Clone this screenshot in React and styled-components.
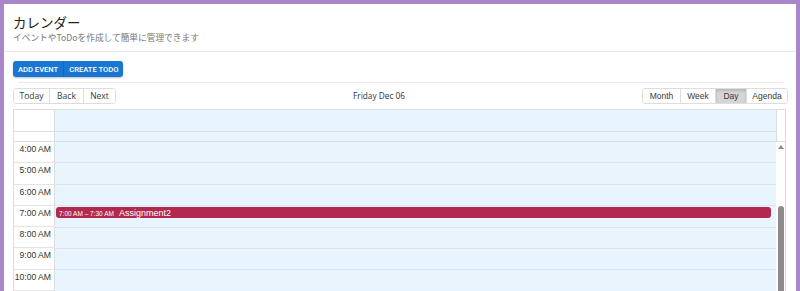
import styled, { createGlobalStyle } from "styled-components"

const GlobalStyle = createGlobalStyle`
    html, body {
        margin:0;
        padding:0;
        background:#a986c8;
        font-family:"Open Sans", "Noto Sans CJK JP", sans-serif;
        overflow:hidden;
    }
`

const Page = styled.div`
    height:291px;
    padding:4px 4px 0 4px;
    box-sizing:border-box;
`

const Card = styled.div`
    background:white;
    height:287px;
    display:flex;
    flex-direction:column;
    overflow:hidden;
`

const Header = styled.div`
    padding:9px 9px 0;
    height:48px;
    box-sizing:border-box;
    border-bottom:1px solid #e6e6e6;
`

const Title = styled.h1`
    margin:0;
    font-family:"Noto Sans CJK JP", sans-serif;
    font-weight:400;
    font-size:13.5px;
    line-height:18px;
    color:#222;
`

const Subtitle = styled.p`
    margin:1px 0 0;
    font-family:"Noto Sans CJK JP", sans-serif;
    font-size:8.7px;
    line-height:12px;
    color:#777;
`

const Actions = styled.div`
    padding:9px 9px 5px;
    display:flex;
`

const ButtonGroup = styled.div`
    display:flex;
    border-radius:3px;
    overflow:hidden;
    box-shadow:0 1px 2px rgba(0,0,0,0.25);
`

const BlueButton = styled.button`
    border:none;
    background:#1976d2;
    color:white;
    font-family:Roboto, sans-serif;
    font-weight:500;
    font-size:7.6px;
    height:16px;
    padding:0 ${p => p.$pad}px;
    border-left:${p => p.$first ? "none" : "1px solid #1565c0"};
`

const Divider = styled.div`
    height:1px;
    background:#ececec;
    margin:0 13px 0 14px;
`

const Toolbar = styled.div`
    display:flex;
    align-items:center;
    padding:5px 8px 0 9px;
    height:15px;
    margin-bottom:6px;
`

const Segment = styled.div`
    display:flex;
    border:1px solid #ddd;
    border-radius:3px;
    overflow:hidden;
`

const NavButton = styled.button`
    background:${p => p.$active ? "#d6d6d6" : "white"};
    box-shadow:${p => p.$active ? "inset 0 2px 3px rgba(0,0,0,0.15)" : "none"};
    border:none;
    border-left:${p => p.$first ? "none" : "1px solid #ddd"};
    height:14px;
    width:${p => p.$w}px;
    padding:0;
    font-family:${p => p.$arial ? '"Liberation Sans", Arial, sans-serif' : '"Open Sans", sans-serif'};
    font-size:8.5px;
    color:#373a3c;
`

const Label = styled.div`
    flex:1;
    text-align:center;
    font-size:8.3px;
    color:#333;
`

const Calendar = styled.div`
    margin:0 10px 0 9px;
    border:1px solid #ddd;
    border-bottom:none;
    flex:1;
    display:flex;
    flex-direction:column;
    overflow:hidden;
`

const HeadRow = styled.div`
    display:flex;
    height:31px;
    border-bottom:1px solid #ddd;
`

const Gutter = styled.div`
    width:40px;
    flex-shrink:0;
    border-right:1px solid #ddd;
    display:flex;
    flex-direction:column;
`

const HeadGutterTop = styled.div`
    height:21px;
    border-bottom:1px solid #ddd;
`

const HeadDay = styled.div`
    flex:1;
    background:#e8f4fe;
    display:flex;
    flex-direction:column;
`

const HeadDayTop = styled.div`
    height:21px;
    border-bottom:1px solid #ddd;
`

const ScrollCell = styled.div`
    width:8px;
    border-left:1px solid #ddd;
`

const Body = styled.div`
    display:flex;
    flex:1;
    overflow:hidden;
`

const Slot = styled.div`
    height:21.4px;
    box-sizing:border-box;
    border-bottom:1px solid #e4e4e4;
    text-align:right;
    white-space:nowrap;
    padding:1px 3px 0 0;
    font-family:"Liberation Sans", Arial, sans-serif;
    font-size:8.6px;
    line-height:12px;
    color:#333;
`

const DayCol = styled.div`
    flex:1;
    background:#e8f4fe;
    position:relative;
`

const HourCell = styled.div`
    height:21.4px;
    box-sizing:border-box;
    border-bottom:1px solid #e0e4e8;
    display:flex;
    flex-direction:column;
`

const HalfCell = styled.div`
    height:50%;
    border-bottom:1px solid #eef3f7;
`

const Event = styled.div`
    position:absolute;
    left:1px;
    right:5px;
    height:11px;
    background:#b3294e;
    border-radius:3px;
    color:white;
    display:flex;
    align-items:baseline;
    gap:5px;
    padding-left:3px;
    overflow:hidden;
    font-family:"Liberation Sans", Arial, sans-serif;
    white-space:nowrap;
`

const EventTime = styled.span`
    font-size:6.5px;
    line-height:10px;
`

const EventTitle = styled.span`
    font-size:9px;
    line-height:12px;
`

const Track = styled.div`
    width:9px;
    background:white;
    display:flex;
    flex-direction:column;
    align-items:center;
`

const Arrow = styled.div`
    margin-top:3px;
    width:0;
    height:0;
    border-left:3px solid transparent;
    border-right:3px solid transparent;
    border-bottom:4px solid #8a8a8a;
`

const Thumb = styled.div`
    margin-top:${p => p.$offset}px;
    width:6px;
    flex:1;
    background:#8c8c8c;
    border-radius:3px 3px 0 0;
`

const hours = ["4:00 AM", "5:00 AM", "6:00 AM", "7:00 AM", "8:00 AM", "9:00 AM", "10:00 AM"]

const App = () => {
    return (
        <Page>
            <GlobalStyle />
            <Card>
                <Header>
                    <Title>カレンダー</Title>
                    <Subtitle>イベントやToDoを作成して簡単に管理できます</Subtitle>
                </Header>
                <Actions>
                    <ButtonGroup>
                        <BlueButton $first $pad={5}>ADD EVENT</BlueButton>
                        <BlueButton $pad={5}>CREATE TODO</BlueButton>
                    </ButtonGroup>
                </Actions>
                <Divider />
                <Toolbar>
                    <Segment>
                        <NavButton $first $w={35}>Today</NavButton>
                        <NavButton $w={34}>Back</NavButton>
                        <NavButton $w={32}>Next</NavButton>
                    </Segment>
                    <Label>Friday Dec 06</Label>
                    <Segment>
                        <NavButton $first $arial $w={37}>Month</NavButton>
                        <NavButton $arial $w={35}>Week</NavButton>
                        <NavButton $arial $active $w={31}>Day</NavButton>
                        <NavButton $arial $w={41}>Agenda</NavButton>
                    </Segment>
                </Toolbar>
                <Calendar>
                    <HeadRow>
                        <Gutter>
                            <HeadGutterTop />
                        </Gutter>
                        <HeadDay>
                            <HeadDayTop />
                        </HeadDay>
                        <ScrollCell />
                    </HeadRow>
                    <Body>
                        <Gutter>
                            {hours.map(h => <Slot key={h}>{h}</Slot>)}
                        </Gutter>
                        <DayCol>
                            {hours.map(h => (
                                <HourCell key={h}>
                                    <HalfCell />
                                </HourCell>
                            ))}
                            <Event style={{ top: 3 * 21.4 + 1 }}>
                                <EventTime>7:00 AM – 7:30 AM</EventTime>
                                <EventTitle>Assignment2</EventTitle>
                            </Event>
                        </DayCol>
                        <Track>
                            <Arrow />
                            <Thumb $offset={57} />
                        </Track>
                    </Body>
                </Calendar>
            </Card>
        </Page>
    )
}

export default App
